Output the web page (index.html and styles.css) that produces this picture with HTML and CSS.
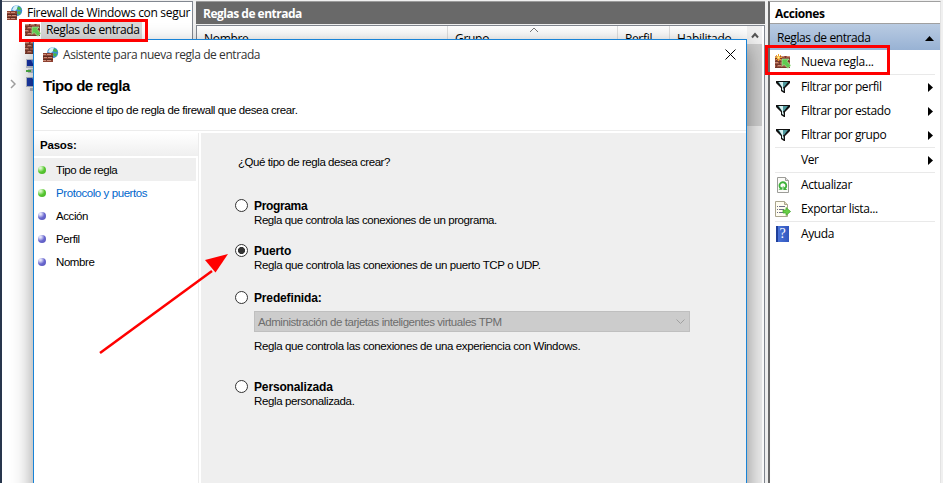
FILE: index.html
```html
<!DOCTYPE html>
<html lang="es">
<head>
<meta charset="utf-8">
<title>Firewall de Windows con seguridad avanzada</title>
<link rel="stylesheet" href="styles.css">
</head>
<body>
<svg class="defs" width="0" height="0" aria-hidden="true">
  <symbol id="bricks" viewBox="0 0 16 16">
    <path fill="#a05543" d="M0 2h15v12H0z"/>
    <path fill="#74392c" d="M4 2h1v2H4zM10 2h1v2h-1zM1 5h1v2H1zM7 5h1v2H7zM13 5h1v2h-1zM4 8h1v2H4zM10 8h1v2h-1zM7 11h1v2H7zM1 11h1v2H1zM0 4h15v1H0zM0 7h15v1H0zM0 10h15v1H0zM0 13h15v1H0z"/>
    <path fill="#c98c78" d="M0 2h4v1H0zM6 2h3v1H6zM12 2h3v1h-3zM3 5h3v1H3zM9 5h3v1H9zM0 8h3v1H0zM3 11h3v1H3z"/>
  </symbol>
  <symbol id="rule-in" viewBox="0 0 16 16">
    <use href="#bricks" width="16" height="16"/>
    <path fill="#5fcb4f" stroke="#b9e6a8" stroke-width=".7" d="M7 5h7l-2 2.200 3.700 4.300-2.800 2.800L9 10.400 7 12.500z"/>
  </symbol>
  <symbol id="rule-new" viewBox="0 0 16 16">
    <use href="#rule-in" width="16" height="16"/>
    <path stroke="#f5a623" stroke-width="1" fill="none" d="M3.500 0v7M0 3.500h7M1 1l5 5M6 1L1 6"/>
    <path fill="#fff3a0" d="M2.500 2.500h2v2h-2z"/>
  </symbol>
  <symbol id="firewall" viewBox="0 0 16 16">
    <circle cx="9.700" cy="5.700" r="5.500" fill="#3f8fd0"/>
    <path fill="#d5f1fa" d="M6 3c1-2 3-3 5-2.500L10 4 8 6 5 5z"/>
    <path fill="#49b649" d="M11 1.500c2 .5 3 1.500 3.500 3L12 5l-2-1zM11 6l3 1-1.500 3L10 8z"/>
    <path fill="#8e4132" d="M0 6h10v9H0z"/>
    <path fill="#c98c78" d="M0 7h3v1H0zM4 7h4v1H4zM1 10h3v1H1zM5 10h4v1H5zM0 13h3v1H0zM4 13h4v1H4z"/>
    <path fill="#5e2b20" d="M0 9h10v1H0zM0 12h10v1H0z"/>
  </symbol>
  <symbol id="computers" viewBox="0 0 16 16">
    <path fill="#c3cad6" d="M1 1h9v9H1zM3 11h8v4H3z"/>
    <path fill="#1632a8" d="M2 2h7v6H2z"/>
    <path fill="#5c86e8" d="M6 2h3v6z"/>
    <path fill="#4fb549" d="M1 12h5v2H1z"/>
  </symbol>
  <symbol id="monitor" viewBox="0 0 16 16">
    <path fill="#b9c0cd" d="M1 1h13v10H1zM5 12h7v3H5z"/>
    <path fill="#1c3cae" d="M2 2h11v8H2z"/>
    <path fill="#7ba0ee" d="M7 2h6v8z"/>
  </symbol>
  <symbol id="funnel" viewBox="0 0 16 16">
    <path fill="#111" d="M1 2h14v2l-5 5v5H9l-3-2V9L1 4z"/>
    <path fill="#4f9a9e" d="M3 3h10L9 8H7z"/>
    <path fill="#d8f2f2" d="M4 3h4v5l1 4-2-1V8z"/>
  </symbol>
  <symbol id="refresh" viewBox="0 0 16 16">
    <path fill="#fbfbf8" stroke="#9c9c98" d="M2.500.500h8l3 3v12h-11z"/>
    <path fill="#ddd" stroke="#9c9c98" d="M10.500.500v3h3"/>
    <path fill="none" stroke="#3db13a" stroke-width="1.800" d="M6 11.500A3.400 3.400 0 1 1 10 11.300"/>
    <path fill="#3db13a" d="M8.300 9v4h4z"/>
    <path fill="#3db13a" d="M3.500 12.800h4V9.500z"/>
  </symbol>
  <symbol id="export" viewBox="0 0 16 16">
    <path fill="#fffdf0" stroke="#aaa58d" d="M.500.500h9l3 3v12H.500z"/>
    <path fill="#e2dcc0" stroke="#aaa58d" d="M9.500.500v3h3"/>
    <path fill="#6d6d88" d="M2 5h1v1H2zM4 5h6v1H4zM2 8h1v1H2zM4 8h5v1H4zM2 11h1v1H2zM4 11h5v1H4z"/>
    <path fill="#68cf45" stroke="#43a52d" stroke-width=".7" d="M8 9h3V6.500l4.600 4-4.600 4V12H8z"/>
  </symbol>
</svg>

<div class="console">
  <div class="desktop-edge"></div>

  <aside class="tree">
    <div class="tree-row root"><svg class="ico"><use href="#firewall"/></svg><span class="tree-title">Firewall de Windows con segur</span></div>
    <div class="tree-row child"><svg class="ico"><use href="#rule-in"/></svg><span class="selected">Reglas de entrada</span></div>
    <div class="tree-row child"><svg class="ico"><use href="#bricks"/></svg></div>
    <div class="tree-row child"><svg class="ico"><use href="#computers"/></svg></div>
    <div class="tree-row child last"><svg class="twisty" viewBox="0 0 6 10"><path d="M1 1l4 4-4 4"/></svg><svg class="ico"><use href="#monitor"/></svg></div>
  </aside>

  <main class="list">
    <h1 class="list-title">Reglas de entrada</h1>
    <div class="list-body">
      <div class="columns">
        <span class="col name">Nombre</span>
        <span class="col group">Grupo<svg class="sort" viewBox="0 0 10 6"><path d="M1 5l4-4 4 4"/></svg></span>
        <span class="col profile">Perfil</span>
        <span class="col enabled">Habilitado</span>
      </div>
      <div class="scrollbar">
        <div class="scroll-up"><svg viewBox="0 0 8 7"><path d="M1 5.500l3-3.500 3 3.500"/></svg></div>
        <div class="scroll-thumb"></div>
      </div>
    </div>
  </main>

  <aside class="actions">
    <h2>Acciones</h2>
    <div class="group-head"><span>Reglas de entrada</span><svg viewBox="0 0 9 5"><path d="M0 5L4.500 0 9 5z"/></svg></div>
    <ul>
      <li class="sep first"><svg class="ico"><use href="#rule-new"/></svg><span>Nueva regla...</span></li>
      <li><svg class="ico"><use href="#funnel"/></svg><span>Filtrar por perfil</span><svg class="more" viewBox="0 0 5 9"><path d="M0 0l5 4.500L0 9z"/></svg></li>
      <li><svg class="ico"><use href="#funnel"/></svg><span>Filtrar por estado</span><svg class="more" viewBox="0 0 5 9"><path d="M0 0l5 4.500L0 9z"/></svg></li>
      <li class="sep"><svg class="ico"><use href="#funnel"/></svg><span>Filtrar por grupo</span><svg class="more" viewBox="0 0 5 9"><path d="M0 0l5 4.500L0 9z"/></svg></li>
      <li class="sep"><i class="ico"></i><span>Ver</span><svg class="more" viewBox="0 0 5 9"><path d="M0 0l5 4.500L0 9z"/></svg></li>
      <li><svg class="ico"><use href="#refresh"/></svg><span>Actualizar</span></li>
      <li class="sep"><svg class="ico"><use href="#export"/></svg><span>Exportar lista...</span></li>
      <li><i class="ico help">?</i><span>Ayuda</span></li>
    </ul>
  </aside>
</div>

<section class="dialog">
  <header class="titlebar">
    <svg class="ico"><use href="#firewall"/></svg>
    <span>Asistente para nueva regla de entrada</span>
    <svg class="close" viewBox="0 0 11 11"><path d="M.500.500l10 10M10.500.500l-10 10"/></svg>
  </header>
  <div class="intro">
    <h3>Tipo de regla</h3>
    <p>Seleccione el tipo de regla de firewall que desea crear.</p>
  </div>
  <div class="wizard">
    <nav class="steps">
      <h4>Pasos:</h4>
      <ol>
        <li class="current"><i class="dot green"></i>Tipo de regla</li>
        <li class="next"><i class="dot green"></i>Protocolo y puertos</li>
        <li><i class="dot"></i>Acción</li>
        <li><i class="dot"></i>Perfil</li>
        <li><i class="dot"></i>Nombre</li>
      </ol>
    </nav>
    <div class="page">
      <p class="question">¿Qué tipo de regla desea crear?</p>
      <div class="option program"><i class="radio"></i><div><b>Programa</b><p>Regla que controla las conexiones de un programa.</p></div></div>
      <div class="option port"><i class="radio on"></i><div><b>Puerto</b><p>Regla que controla las conexiones de un puerto TCP o UDP.</p></div></div>
      <div class="option preset"><i class="radio"></i><div><b>Predefinida:</b>
        <div class="select"><span>Administración de tarjetas inteligentes virtuales TPM</span><svg viewBox="0 0 9 6"><path d="M.500.500l4 4 4-4"/></svg></div>
        <p>Regla que controla las conexiones de una experiencia con Windows.</p></div></div>
      <div class="option custom"><i class="radio"></i><div><b>Personalizada</b><p>Regla personalizada.</p></div></div>
    </div>
  </div>
</section>

<div class="mark mark-tree"></div>
<div class="mark mark-action"></div>
<svg class="arrow" viewBox="0 0 132 102"><path class="shaft" d="M2 100L114 18"/><path class="head" d="M130 1L117.500 19.500 107 7z"/></svg>
</body>
</html>
```

FILE: styles.css
```css
* { box-sizing: border-box; }
body {
  margin: 0;
  width: 943px;
  height: 483px;
  overflow: hidden;
  position: relative;
  background: #f0f0f0;
  color: #000;
  font: 12px/16px "Open Sans", "Noto Sans", sans-serif;
  letter-spacing: -0.4px;
  white-space: nowrap;
}
h1, h2, h3, h4, p, ul, ol { margin: 0; padding: 0; font-size: inherit; }
ul, ol { list-style: none; }
svg { display: block; flex: none; }
.defs { position: absolute; }
.ico { width: 16px; height: 16px; flex: none; }

.console { display: flex; height: 483px; }
.desktop-edge { width: 2px; background: #28364d; }

/* Console tree */
.tree {
  width: 191px;
  margin-top: 1px;
  padding-top: 2px;
  border: solid #828790;
  border-width: 1px 1px 0 0;
  background: #fff;
  overflow: hidden;
}
.tree-row { display: flex; align-items: center; height: 18px; padding-left: 23px; }
.tree-row.root { padding-left: 5px; gap: 4px; height: 17px; letter-spacing: -0.31px; }
.tree-row.last { padding-left: 8px; }
.selected { background: #d9d9d9; padding: 0 4px 0 5px; height: 18px; line-height: 18px; width: 101px; }
.twisty { width: 6px; height: 10px; margin-right: 9px; fill: none; stroke: #a0a0a0; stroke-width: 1.500; }

/* Rule list */
.list { width: 569px; margin: 1px 0 0 3px; display: flex; flex-direction: column; }
.list-title {
  height: 23px;
  padding-left: 7px;
  line-height: 24px;
  border-top: 1px solid #9b9b9b;
  background: #696969;
  color: #fff;
  margin-bottom: 1px;
  letter-spacing: -0.5px;
}
.list-body { flex: 1; display: flex; border: solid #828790; border-width: 1px 1px 0 1px; background: #fff; }
.columns { display: flex; width: 550px; height: 25px; background: linear-gradient(#fff, #f1f1f1); letter-spacing: -0.3px; }
.col { border-right: 1px solid #dedede; padding: 5px 0 0 7px; position: relative; }
.name { width: 251px; }
.group { width: 170px; }
.profile { width: 52px; }
.enabled { width: 77px; border: 0; }
.sort { position: absolute; left: 81px; top: 1px; width: 10px; height: 6px; fill: none; stroke: #777; }
.scrollbar { width: 15px; background: #ececec; }
.scroll-up { height: 18px; padding: 6px 0 0 4px; background: #f0f0f0; }
.scroll-up svg { width: 8px; height: 7px; fill: none; stroke: #555; stroke-width: 2; }
.scroll-thumb { height: 82px; background: #cdcdcd; }

/* Actions pane */
.actions {
  width: 173px;
  margin: 1px 0 0 3px;
  border: solid #696969;
  border-width: 1px 1px 0 2px;
  border-right-color: #e3e3e3;
  border-top-color: #a0a0a0;
  background: #fff;
}
.actions h2 { height: 22px; line-height: 24px; padding-left: 5px; border-bottom: 1px solid #a0a0a0; }
.group-head {
  display: flex;
  align-items: center;
  justify-content: space-between;
  height: 26px;
  padding: 2px 6px 0 7px;
  background: linear-gradient(#b9cbe2, #98b2d4);
}
.group-head svg { width: 9px; height: 5px; }
.actions li { display: flex; align-items: center; height: 24px; margin-left: 5px; padding-right: 2px; width: 160px; }
.actions li span { margin-left: 10px; flex: 1; }
.actions li.first span { letter-spacing: -0.25px; }
.actions li.sep { height: 25px; border-bottom: 1px solid #e9e9e9; }
.more { width: 5px; height: 9px; }
.actions .help {
  width: 13px;
  margin: 0 2px 0 1px;
  background: linear-gradient(90deg, #1f3f9a 2px, #4a73d8 2px, #3156be);
  color: #fff;
  font: 14px/16px "Liberation Serif", serif;
  text-align: center;
}

/* Wizard dialog */
.dialog {
  position: absolute;
  left: 33px;
  top: 39px;
  width: 714px;
  height: 460px;
  border: 1px solid #1883d7;
  background: #fff;
  box-shadow: 0 8px 20px rgba(0, 0, 0, .42);
  font: 11.500px/14px "Liberation Sans", sans-serif;
  letter-spacing: -0.38px;
}
.titlebar {
  display: flex;
  align-items: center;
  height: 30px;
  padding-left: 9px;
  font: 12px/16px "Open Sans", sans-serif;
  letter-spacing: -0.42px;
  color: #333;
}
.titlebar span { margin-left: 4px; flex: 1; }
.close { width: 11px; height: 11px; margin: -2px 10px 0 0; fill: none; stroke: #000; }
.intro { height: 61px; padding-left: 6px; margin-bottom: 2px; border-bottom: 1px solid #ececec; }
.intro h3 { font-size: 15px; line-height: 18px; padding: 7px 0 0 3px; letter-spacing: -0.48px; }
.intro p { padding-top: 8px; }
.wizard { display: flex; height: 366px; }
.steps { width: 165px; border-right: 1px solid #ececec; margin-right: 2px; }
.steps h4 { height: 23px; line-height: 24px; padding-left: 6px; background: linear-gradient(#fff, #efefef); margin-bottom: 2px; letter-spacing: -0.2px; }
.steps li { display: flex; align-items: center; height: 23px; margin-right: 2px; letter-spacing: -0.42px; }
.steps .current { background: #efefef; }
.steps .next { color: #0066cc; }
.dot {
  width: 8px;
  height: 8px;
  margin: 0 10px 0 4px;
  border-radius: 50%;
  background: radial-gradient(circle at 30% 25%, #e2e2fa 10%, #6a68cf 50%, #5553b8);
}
.dot.green { background: radial-gradient(circle at 30% 25%, #d9f7c9 10%, #58c832 50%, #46ad25); }
.page { flex: 1; padding: 22px 0 0 34px; background: #efefef; }
.question { padding-left: 3px; height: 43px; letter-spacing: -0.44px; }
.option { display: flex; }
.option b { display: block; font-size: 12px; height: 15px; line-height: 17px; letter-spacing: -0.15px; }
.program b { letter-spacing: -0.35px; }
.radio {
  flex: none;
  width: 13px;
  height: 13px;
  margin: 1px 6px 0 0;
  border: 1px solid #333;
  border-radius: 50%;
  background: #fff;
}
.radio.on { background: radial-gradient(circle, #333 3.300px, #fff 3.800px); }
.program { height: 45px; letter-spacing: -0.42px; }
.port { height: 47px; }
.preset { height: 89px; }
.select {
  display: flex;
  align-items: center;
  justify-content: space-between;
  width: 436px;
  height: 21px;
  margin: 6px 0 7px;
  padding: 0 4px 0 3px;
  border: 1px solid #bfbfbf;
  background: #ccc;
  color: #6d6d6d;
  letter-spacing: -0.44px;
}
.select svg { width: 9px; height: 6px; fill: none; stroke: #a0a0a0; }

/* Red callouts */
.mark { position: absolute; border: 3px solid #f00; }
.mark-tree { left: 19px; top: 19px; width: 129px; height: 23px; }
.mark-action { left: 765px; top: 45px; width: 125px; height: 30px; }
.arrow { position: absolute; left: 98px; top: 253px; width: 132px; height: 102px; }
.arrow .shaft { stroke: #f00; stroke-width: 2.500; fill: none; }
.arrow .head { fill: #f00; }
```
